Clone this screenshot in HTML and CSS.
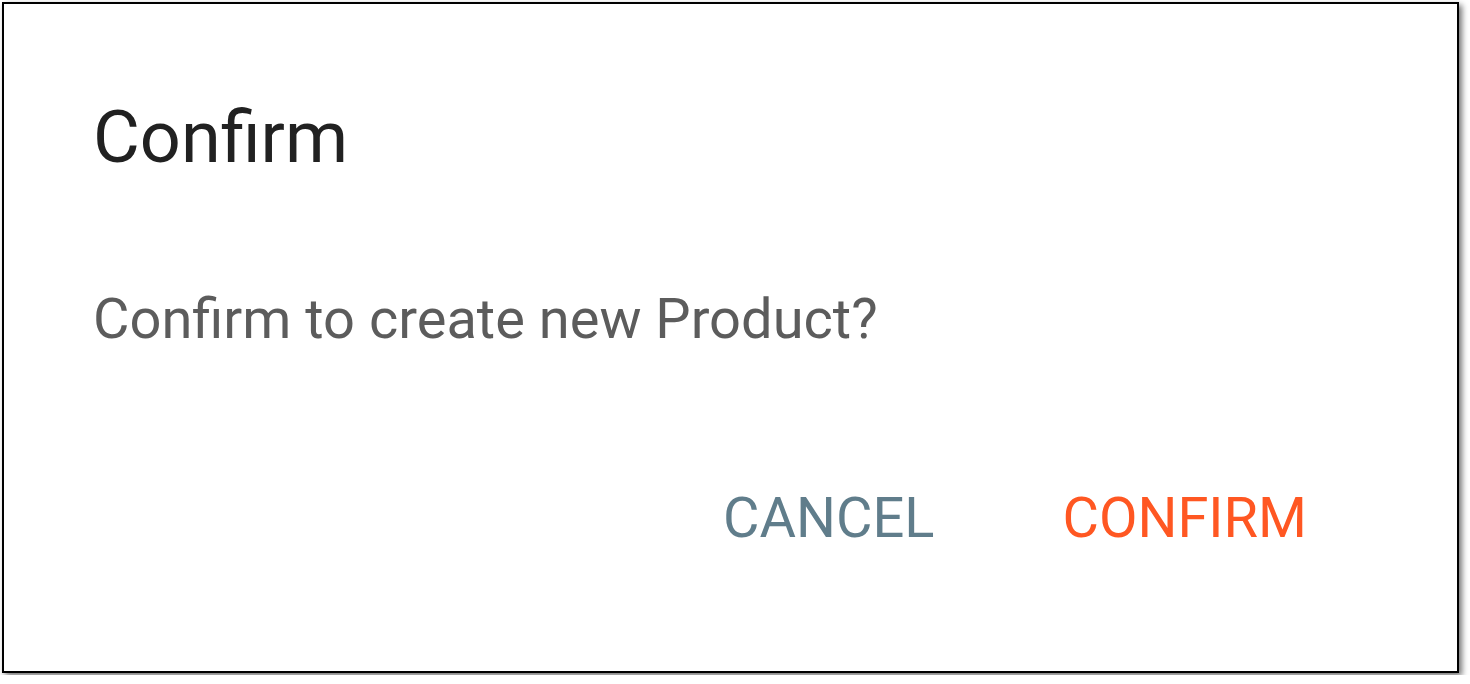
FILE: index.html
```html
<!DOCTYPE html>
<html>
<head>
<meta charset="utf-8">
<link rel="stylesheet" href="styles.css">
</head>
<body>
<div class="stage">
  <div class="dialog">
    <h1 class="title">Confirm</h1>
    <p class="message">Confirm to create new Product?</p>
    <div class="actions">
      <button class="btn btn-cancel">CANCEL</button>
      <button class="btn btn-confirm">CONFIRM</button>
    </div>
  </div>
</div>
</body>
</html>
```
FILE: styles.css
```css
html, body {
  margin: 0;
  padding: 0;
  background: #ffffff;
}
.stage {
  padding: 2px;
  font-family: Roboto, "Liberation Sans", sans-serif;
}
.dialog {
  box-sizing: border-box;
  width: 1457px;
  height: 671px;
  border: 2px solid #000;
  background: #fff;
  box-shadow: 3px 3px 6px rgba(0, 0, 0, 0.55);
  padding: 94px 150px 0 89px;
  display: flex;
  flex-direction: column;
}
.title {
  margin: 0;
  font-size: 72px;
  line-height: 80px;
  font-weight: 400;
  color: #212121;
}
.message {
  margin: 109px 0 0 0;
  font-size: 56px;
  line-height: 64px;
  color: #5c5c5c;
}
.actions {
  margin-top: 135px;
  display: flex;
  justify-content: flex-end;
  gap: 128px;
}
.btn {
  border: none;
  background: none;
  padding: 0;
  font-family: inherit;
  font-size: 56px;
  line-height: 64px;
  font-weight: 400;
}
.btn-cancel {
  color: #607d8b;
}
.btn-confirm {
  color: #ff5722;
}
```
